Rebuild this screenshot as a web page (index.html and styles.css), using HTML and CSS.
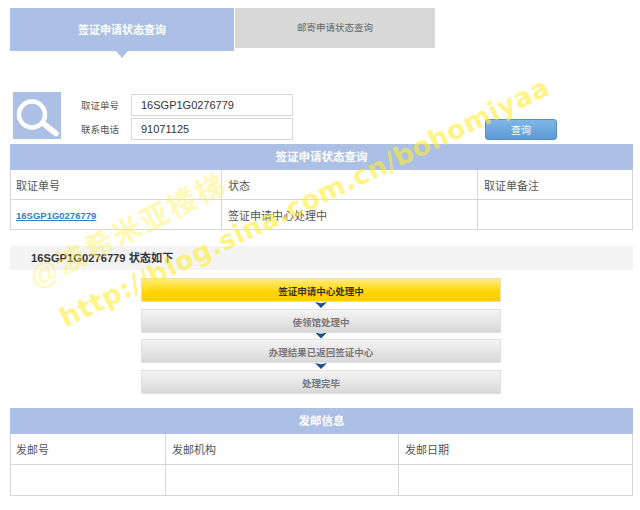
FILE: index.html
```html
<!DOCTYPE html>
<html lang="en">
<head>
    <meta charset="UTF-8">
    <meta name="viewport" content="width=device-width, initial-scale=1.0">
    <title>签证申请状态查询</title>
    <link rel="stylesheet" href="styles.css">
</head>
<body>
    <div class="page">
        <div class="tabs">
            <div class="tab tab-active">签证申请状态查询</div>
            <div class="tab">邮寄申请状态查询</div>
        </div>

        <div class="search">
            <div class="search-icon">
                <svg width="48" height="47" viewBox="0 0 48 47">
                    <circle cx="19" cy="22.5" r="13" fill="none" stroke="#fff" stroke-width="4.5"/>
                    <path d="M31 32 L43 41.5" fill="none" stroke="#fff" stroke-width="5.5" stroke-linecap="round"/>
                </svg>
            </div>
            <div class="search-fields">
                <div class="field">
                    <label>取证单号</label>
                    <input type="text" value="16SGP1G0276779">
                </div>
                <div class="field">
                    <label>联系电话</label>
                    <input type="text" value="91071125">
                </div>
            </div>
            <button class="search-btn">查询</button>
        </div>

        <table class="info-table">
            <colgroup>
                <col class="col-a">
                <col class="col-b">
                <col>
            </colgroup>
            <tr><th colspan="3">签证申请状态查询</th></tr>
            <tr>
                <td>取证单号</td>
                <td>状态</td>
                <td>取证单备注</td>
            </tr>
            <tr>
                <td><a href="#">16SGP1G0276779</a></td>
                <td>签证申请中心处理中</td>
                <td></td>
            </tr>
        </table>

        <div class="status-title">16SGP1G0276779 状态如下</div>

        <div class="steps">
            <div class="step step-current">签证申请中心处理中</div>
            <div class="step-arrow"></div>
            <div class="step">使领馆处理中</div>
            <div class="step-arrow"></div>
            <div class="step">办理结果已返回签证中心</div>
            <div class="step-arrow"></div>
            <div class="step">处理完毕</div>
        </div>

        <table class="info-table post-table">
            <colgroup>
                <col class="col-c">
                <col class="col-d">
                <col>
            </colgroup>
            <tr><th colspan="3">发邮信息</th></tr>
            <tr>
                <td>发邮号</td>
                <td>发邮机构</td>
                <td>发邮日期</td>
            </tr>
            <tr>
                <td></td>
                <td></td>
                <td></td>
            </tr>
        </table>

        <!-- blog watermark over the page -->
        <div class="mark mark-name">@波希米亚楼梯</div>
        <div class="mark mark-url">http://blog.sina.com.cn/bohomiyaa</div>
    </div>
</body>
</html>
```

FILE: styles.css
```css
* {
    box-sizing: border-box;
}

body {
    margin: 0;
    background-color: white;
    font-family: 'Liberation Sans', 'Noto Sans CJK SC', sans-serif;
    color: #555;
}

.page {
    position: relative;
    width: 640px;
    height: 510px;
    overflow: hidden;
    padding: 8px 7px 0 10px;
}

/* tabs */
.tabs {
    display: flex;
    align-items: flex-start;
    gap: 1px;
}

.tab {
    width: 200px;
    height: 40px;
    line-height: 40px;
    background-color: #d8d8d8;
    text-align: center;
    font-size: 9.5px;
    color: #666;
}

.tab-active {
    position: relative;
    width: 224px;
    height: 43px;
    line-height: 44px;
    background-color: #abc0e4;
    color: white;
    font-size: 11px;
    font-weight: bold;
}

.tab-active::after {
    content: '';
    position: absolute;
    left: 106px;
    top: 43px;
    border-left: 6px solid transparent;
    border-right: 6px solid transparent;
    border-top: 7px solid #abc0e4;
}

/* search form */
.search {
    display: flex;
    height: 52px;
    margin-top: 41px;
    padding-left: 3px;
}

.search-icon {
    width: 48px;
    height: 47px;
    background-color: #abc0e4;
}

.search-fields {
    margin-left: 20px;
    padding-top: 1px;
}

.field {
    display: flex;
    align-items: center;
    height: 24px;
}

.field label {
    width: 50px;
    font-size: 9.5px;
    color: #555;
}

.field input {
    width: 162px;
    height: 22px;
    border: 1px solid #d8d8d8;
    padding: 0 9px;
    font-family: inherit;
    font-size: 11px;
    color: #333;
}

.search-btn {
    width: 72px;
    height: 21px;
    margin-top: 27px;
    margin-left: 192px;
    background: linear-gradient(#7fb6e6, #5c9ad6);
    border: 1px solid #5b8fc0;
    border-radius: 3px;
    color: white;
    font-family: inherit;
    font-size: 10px;
}

/* tables */
.info-table {
    width: 623px;
    border-collapse: collapse;
    table-layout: fixed;
    font-size: 11px;
}

.info-table th {
    height: 25px;
    padding: 0 0 2px;
    background-color: #abc0e4;
    border: 1px solid #abc0e4;
    color: white;
    font-size: 11.5px;
    font-weight: bold;
}

.info-table td {
    height: 30px;
    padding: 0 6px;
    border: 1px solid #d8d8d8;
    color: #555;
}

.info-table td:first-child {
    padding-left: 5px;
}

.info-table a {
    color: #2a83c8;
    font-size: 9.5px;
    font-weight: bold;
}

.col-a {
    width: 211px;
}

.col-b {
    width: 256px;
}

.col-c {
    width: 155px;
}

.col-d {
    width: 233px;
}

/* status steps */
.status-title {
    width: 623px;
    height: 24px;
    line-height: 25px;
    margin-top: 16px;
    padding-left: 21px;
    background-color: #f4f4f4;
    font-size: 11.2px;
    font-weight: bold;
    color: #333;
}

.steps {
    width: 360px;
    margin: 8px 0 0 131px;
}

.step {
    height: 24px;
    line-height: 25px;
    border: 1px solid #e0e0e0;
    background: linear-gradient(#f4f4f4, #d8d8d8);
    text-align: center;
    font-size: 9.5px;
    font-weight: bold;
    color: #777;
}

.step-current {
    background: linear-gradient(#ffed80, #ffd400 60%, #ffcf00);
    border-color: #e6dfc0;
    color: #333;
}

.step-arrow {
    position: relative;
    height: 6.5px;
}

.step-arrow::after {
    content: '';
    position: absolute;
    left: 174px;
    top: 0;
    width: 12px;
    height: 6px;
    background-color: #1f4f8a;
    clip-path: polygon(0 0, 50% 20%, 100% 0, 50% 100%);
}

.post-table {
    margin-top: 14px;
}

.post-table td {
    height: 31px;
}

/* watermark */
.mark {
    position: absolute;
    transform-origin: left bottom;
    white-space: nowrap;
    font-weight: bold;
}

.mark-name {
    left: 40px;
    top: 254px;
    transform: rotate(-27deg);
    color: rgba(255, 240, 90, 0.45);
    font-size: 29px;
    letter-spacing: 2px;
}

.mark-url {
    left: 68px;
    top: 302px;
    transform: rotate(-25.7deg);
    color: rgba(255, 238, 50, 0.6);
    font-family: 'DejaVu Sans', sans-serif;
    font-size: 26.5px;
    letter-spacing: 0.6px;
}
```
